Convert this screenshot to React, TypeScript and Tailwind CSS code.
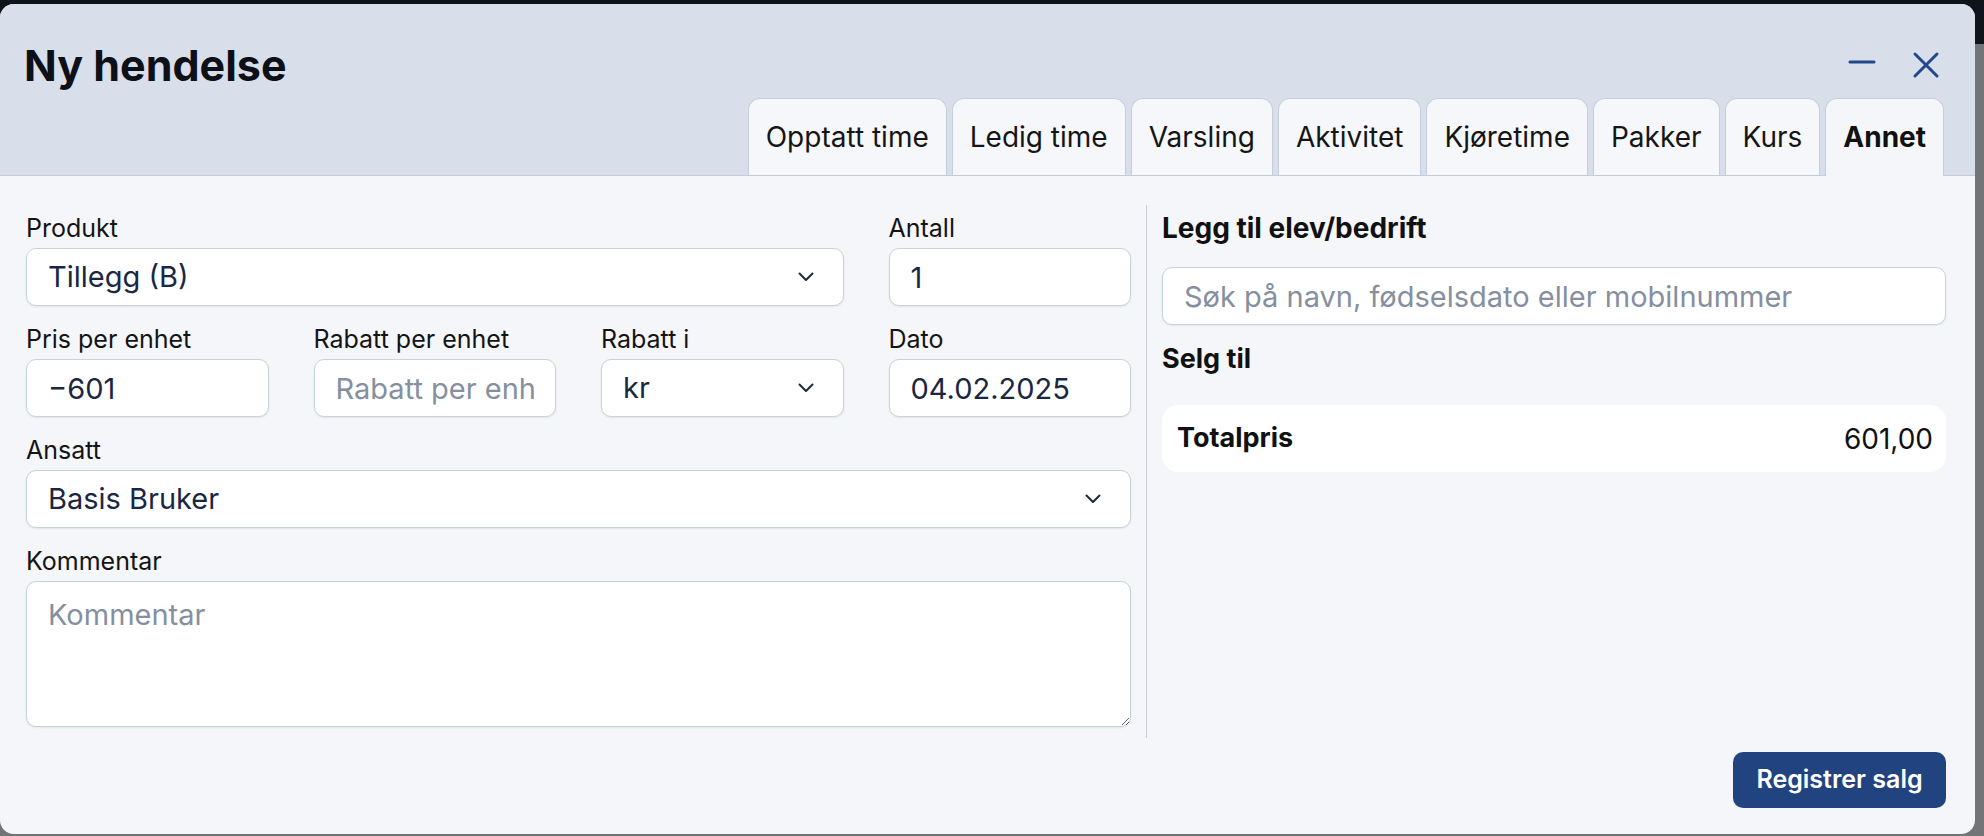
import React from "react";

const tabs = [
  "Opptatt time",
  "Ledig time",
  "Varsling",
  "Aktivitet",
  "Kjøretime",
  "Pakker",
  "Kurs",
  "Annet",
];

const boxCls =
  "h-[58px] w-full rounded-[10px] border border-[#c4d4d7] bg-white px-[21px] text-[29px] text-[#1b2742] shadow-[0_1px_2px_rgba(15,23,42,0.08)] outline-none placeholder:text-[#868fa0]";

const Chevron = () => (
  <svg width="16" height="10" viewBox="0 0 16 10" fill="none" className="shrink-0">
    <path
      d="M1.5 1.5 8 8l6.5-6.5"
      stroke="#1f2937"
      strokeWidth="2"
      strokeLinecap="round"
      strokeLinejoin="round"
    />
  </svg>
);

const Label = ({ children }: { children: React.ReactNode }) => (
  <div className="text-[25px] leading-[40px] text-[#141414]">{children}</div>
);

const Select = ({ value }: { value: string }) => (
  <div className="flex h-[58px] w-full items-center justify-between rounded-[10px] border border-[#c4d4d7] bg-white pl-[21px] pr-[29px] text-[29px] text-[#1b2742] shadow-[0_1px_2px_rgba(15,23,42,0.08)]">
    <span>{value}</span>
    <Chevron />
  </div>
);

export default function App() {
  return (
    <div className="relative h-[836px] w-[1984px] overflow-hidden bg-[#737477] font-[Inter,sans-serif]">
      {/* page behind the overlay */}
      <div className="absolute inset-x-0 top-0 h-[44px] bg-[#0f131a]" />

      <div className="relative mt-[4px] flex h-[830px] w-[1975px] flex-col overflow-hidden rounded-[14px] bg-[#f4f6fa]">
        {/* header */}
        <div className="border-b border-[#c3ccda] bg-[#d8dfea]">
          <div className="flex items-center justify-between pl-[24px] pr-[35px] pt-[35px]">
            <h1 className="text-[43px] font-bold leading-[52px] text-[#0d1017]">Ny hendelse</h1>
            <div className="flex items-center gap-[36px]">
              <svg width="28" height="28" viewBox="0 0 28 28" className="mb-[6px]">
                <path d="M2 14h24" stroke="#22478a" strokeWidth="3" strokeLinecap="round" />
              </svg>
              <svg width="28" height="28" viewBox="0 0 28 28">
                <path
                  d="M3 3l22 22M25 3 3 25"
                  stroke="#22478a"
                  strokeWidth="3"
                  strokeLinecap="round"
                />
              </svg>
            </div>
          </div>
          <div className="mt-[7px] flex h-[77px] items-start justify-end gap-[5px] pr-[31px]">
            {tabs.map((t) => {
              const active = t === "Annet";
              return (
                <div
                  key={t}
                  className={
                    active
                      ? "relative flex h-[78px] items-center rounded-t-[12px] border border-b-0 border-[#c6cedb] bg-[#f4f6fa] px-[17px] pb-px text-[28px] font-bold text-[#111111]"
                      : "flex h-[77px] items-center rounded-t-[12px] border border-b-0 border-[#c6cedb] bg-[#f5f7fa] px-[17px] text-[28px] text-[#151515]"
                  }
                >
                  {t}
                </div>
              );
            })}
          </div>
        </div>

        {/* body */}
        <div className="flex flex-1 flex-col pl-[26px] pr-[29px] pt-[29px]">
          <div className="flex h-[533px]">
            <div className="grid w-[1105px] grid-cols-4 content-start gap-x-[45px] gap-y-[13px] pt-[3px]">
              <div className="col-span-3 flex flex-col">
                <Label>Produkt</Label>
                <Select value="Tillegg (B)" />
              </div>
              <div className="flex flex-col">
                <Label>Antall</Label>
                <input className={boxCls} defaultValue="1" />
              </div>

              <div className="flex flex-col">
                <Label>Pris per enhet</Label>
                <input className={boxCls} defaultValue="−601" />
              </div>
              <div className="flex flex-col">
                <Label>Rabatt per enhet</Label>
                <input className={boxCls} placeholder="Rabatt per enhet" />
              </div>
              <div className="flex flex-col">
                <Label>Rabatt i</Label>
                <Select value="kr" />
              </div>
              <div className="flex flex-col">
                <Label>Dato</Label>
                <input className={boxCls} defaultValue="04.02.2025" />
              </div>

              <div className="col-span-4 flex flex-col">
                <Label>Ansatt</Label>
                <Select value="Basis Bruker" />
              </div>

              <div className="col-span-4 flex flex-col">
                <Label>Kommentar</Label>
                <textarea
                  className="h-[146px] w-full rounded-[10px] border border-[#c4d4d7] bg-white px-[21px] py-[11px] text-[29px] text-[#1b2742] shadow-[0_1px_2px_rgba(15,23,42,0.08)] outline-none placeholder:text-[#868fa0]"
                  placeholder="Kommentar"
                />
              </div>
            </div>

            <div className="mx-[15px] w-px bg-[#c9ced6]" />

            <div className="flex flex-1 flex-col pt-[3px]">
              <div className="text-[28px] font-bold leading-[40px] text-[#111111]">
                Legg til elev/bedrift
              </div>
              <input
                className={boxCls + " mt-[19px]"}
                placeholder="Søk på navn, fødselsdato eller mobilnummer"
              />
              <div className="mt-[14px] text-[27px] font-bold leading-[40px] text-[#111111]">
                Selg til
              </div>
              <div className="mt-[26px] flex h-[67px] items-center justify-between rounded-[16px] bg-white pl-[15px] pr-[13px] text-[27px] text-[#111111]">
                <span className="font-bold">Totalpris</span>
                <span className="text-[28px]">601,00</span>
              </div>
            </div>
          </div>

          <div className="mt-[14px] flex justify-end">
            <button className="h-[56px] w-[213px] rounded-[10px] bg-[#21437f] text-[25px] font-semibold text-white">
              Registrer salg
            </button>
          </div>
        </div>
      </div>
    </div>
  );
}
